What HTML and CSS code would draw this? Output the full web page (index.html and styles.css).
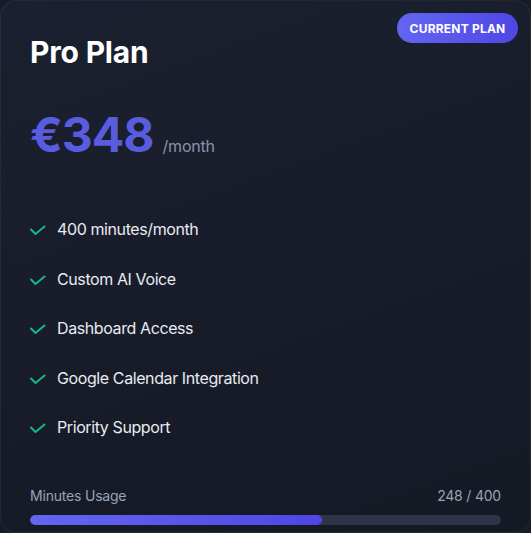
FILE: index.html
```html
<!DOCTYPE html>
<html lang="en">
<head>
<meta charset="utf-8">
<title>Pro Plan</title>
<link rel="stylesheet" href="styles.css">
</head>
<body>
<div class="card">
  <span class="badge">Current Plan</span>
  <h2 class="title">Pro Plan</h2>
  <div class="price-row">
    <span class="price">€348</span>
    <span class="period">/month</span>
  </div>
  <ul class="features">
    <li><svg class="check" viewBox="0 0 16 16"><polyline points="1 8.5 5.5 13 14.5 5.5"/></svg>400 minutes/month</li>
    <li><svg class="check" viewBox="0 0 16 16"><polyline points="1 8.5 5.5 13 14.5 5.5"/></svg>Custom AI Voice</li>
    <li><svg class="check" viewBox="0 0 16 16"><polyline points="1 8.5 5.5 13 14.5 5.5"/></svg>Dashboard Access</li>
    <li><svg class="check" viewBox="0 0 16 16"><polyline points="1 8.5 5.5 13 14.5 5.5"/></svg>Google Calendar Integration</li>
    <li><svg class="check" viewBox="0 0 16 16"><polyline points="1 8.5 5.5 13 14.5 5.5"/></svg>Priority Support</li>
  </ul>
  <div class="usage">
    <div class="usage-head">
      <span>Minutes Usage</span>
      <span>248 / 400</span>
    </div>
    <div class="track"><div class="fill" style="width: 62%"></div></div>
  </div>
</div>
</body>
</html>
```

FILE: styles.css
```css
* { box-sizing: border-box; }
html, body {
  margin: 0;
  padding: 0;
  background: #171b27;
}
body {
  font-family: Inter, "Noto Sans", "Liberation Sans", sans-serif;
  color: #f1f3f7;
}
.card {
  position: relative;
  width: 531px;
  height: 533px;
  border-radius: 16px;
  border: 1px solid rgba(255, 255, 255, 0.06);
  background: linear-gradient(160deg, #1b2030 0%, #181c29 55%, #151924 100%);
  padding: 33px 29px 0 29px;
  display: flex;
  flex-direction: column;
}
.badge {
  position: absolute;
  top: 12px;
  right: 12px;
  height: 30px;
  width: 121px;
  border-radius: 15px;
  background: linear-gradient(90deg, #6366f1, #4f46e5);
  color: #ffffff;
  font-size: 12px;
  font-weight: 700;
  letter-spacing: 0.2px;
  text-transform: uppercase;
  display: flex;
  align-items: center;
  justify-content: center;
}
.title {
  margin: 0;
  font-size: 30px;
  line-height: 36px;
  font-weight: 700;
  color: #ffffff;
  letter-spacing: -0.2px;
}
.price-row {
  margin-top: 41px;
  display: flex;
  align-items: baseline;
  gap: 9px;
}
.price {
  font-size: 48px;
  line-height: 48px;
  font-weight: 700;
  color: #5a5ce0;
  letter-spacing: -1px;
}
.period {
  font-size: 16px;
  color: #8b93a6;
  letter-spacing: -0.2px;
}
.features {
  list-style: none;
  margin: 58px 0 0 0;
  padding: 0;
  display: flex;
  flex-direction: column;
  gap: 25.5px;
}
.features li {
  display: flex;
  align-items: center;
  gap: 11px;
  font-size: 16px;
  line-height: 24px;
  color: #e8ebf1;
  letter-spacing: -0.4px;
}
.check {
  width: 16px;
  height: 16px;
  flex: none;
}
.check polyline {
  fill: none;
  stroke: #16b985;
  stroke-width: 2;
  stroke-linecap: round;
  stroke-linejoin: round;
}
.usage {
  margin-top: 47px;
}
.usage-head {
  display: flex;
  justify-content: space-between;
  font-size: 14px;
  line-height: 20px;
  color: #9aa2b4;
  letter-spacing: -0.2px;
}
.track {
  margin-top: 9px;
  height: 10px;
  border-radius: 5px;
  background: #2e3446;
  overflow: hidden;
}
.fill {
  height: 100%;
  border-radius: 5px;
  background: linear-gradient(90deg, #6366f1, #4f46e5);
}
```
